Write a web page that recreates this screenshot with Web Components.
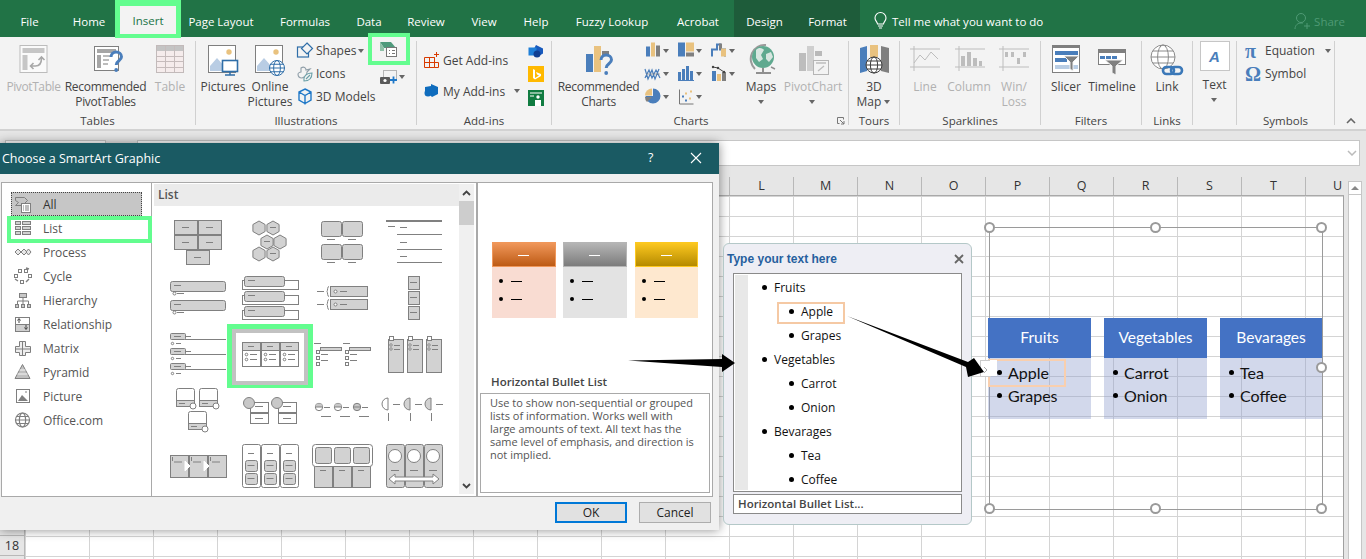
<!DOCTYPE html>
<html lang="en"><head><meta charset="utf-8"><title>SmartArt</title>
<style>
html,body{margin:0;height:559px;overflow:hidden;background:#fff}
body{font:12px "Open Sans","Noto Sans",sans-serif;color:#444;position:relative;width:1366px}
</style></head><body>
<x-tabs>
  <x-tab w="59">File</x-tab><x-tab w="56" pl="4">Home</x-tab><x-tab active>Insert</x-tab><x-tab w="80">Page Layout</x-tab><x-tab w="83" pl="5">Formulas</x-tab><x-tab w="50">Data</x-tab><x-tab w="64">Review</x-tab><x-tab w="52">View</x-tab><x-tab w="52">Help</x-tab><x-tab w="100">Fuzzy Lookup</x-tab><x-tab w="72">Acrobat</x-tab><x-tab w="61" ctx>Design</x-tab><x-tab w="65" ctx>Format</x-tab>
  <x-tell>Tell me what you want to do</x-tell>
  <x-share>Share</x-share>
</x-tabs>
<x-ribbon>
  <x-group w="196" label="Tables" pl="6">
    <x-big w="55" off style="letter-spacing:-.4px"><x-icon slot="icon" name="pivot" box="17.5 43 32 32"></x-icon>PivotTable</x-big>
    <x-big w="89" style="letter-spacing:-.3px"><x-icon slot="icon" name="recpivot" box="90 43 32 34"></x-icon>Recommended<br>PivotTables</x-big>
    <x-big w="40" off><x-icon slot="icon" name="table" box="154 43 32 32"></x-icon>Table</x-big>
  </x-group>
  <x-group w="221" label="Illustrations" pl="4">
    <x-big w="46"><x-icon slot="icon" name="pictures" box="207 43 34 34"></x-icon>Pictures</x-big>
    <x-big w="48"><x-icon slot="icon" name="online" box="254 43 34 34"></x-icon>Online<br>Pictures</x-big>
    <x-col w="74">
      <x-sbtn pl="2"><x-icon slot="icon" name="shapes" box="296 43.5 18 17"></x-icon>Shapes <x-caret></x-caret></x-sbtn>
      <x-sbtn pl="2"><x-icon slot="icon" name="iconsi" box="296 66 18 17"></x-icon>Icons</x-sbtn>
      <x-sbtn pl="2"><x-icon slot="icon" name="cube" box="296 89.5 18 17"></x-icon>3D Models</x-sbtn>
    </x-col>
    <x-col w="42">
      <x-hl><x-icon name="smartart" box="380 42 20 18"></x-icon></x-hl>
      <x-sbtn pl="11"><x-icon slot="icon" name="shot" box="381 67 18 16"></x-icon><x-caret></x-caret></x-sbtn>
    </x-col>
  </x-group>
  <x-group w="135" label="Add-ins" pl="7">
    <x-addins>
      <x-sbtn h="31" pl="0"><x-icon slot="icon" name="getadd" box="424 52 16 16"></x-icon><span style="margin-left:1px">Get Add-ins</span></x-sbtn>
      <x-sbtn h="31" pl="0" wd="104"><x-icon slot="icon" name="myadd" box="424 82 16 16"></x-icon><span style="margin-left:1px">My Add-ins</span><x-caret style="margin-left:7px"></x-caret></x-sbtn>
    </x-addins>
    <x-office>
      <x-icon name="visio" box="528 45 16 13"></x-icon>
      <x-icon name="bing" box="528 66 16 16"></x-icon>
      <x-icon name="people" box="528 89 16 16"></x-icon>
    </x-office>
  </x-group>
  <x-group w="297" label="Charts" corner lr="18">
    <x-big w="93" style="letter-spacing:-.3px"><x-icon slot="icon" name="recchart" box="584 43 32 34"></x-icon>Recommended<br>Charts</x-big>
    <x-col w="33">
      <x-sbtn nogap><x-icon slot="icon" name="c1" box="645 43.5 18 17"></x-icon><x-caret></x-caret></x-sbtn>
      <x-sbtn nogap><x-icon slot="icon" name="c4" box="645 66 18 17"></x-icon><x-caret></x-caret></x-sbtn>
      <x-sbtn nogap><x-icon slot="icon" name="c7" box="645 89.5 18 17"></x-icon><x-caret></x-caret></x-sbtn>
    </x-col>
    <x-col w="33">
      <x-sbtn nogap><x-icon slot="icon" name="c2" box="678 43.5 18 17"></x-icon><x-caret></x-caret></x-sbtn>
      <x-sbtn nogap><x-icon slot="icon" name="c5" box="678 66 18 17"></x-icon><x-caret></x-caret></x-sbtn>
      <x-sbtn nogap><x-icon slot="icon" name="c8" box="678 89.5 18 17"></x-icon><x-caret></x-caret></x-sbtn>
    </x-col>
    <x-col w="33">
      <x-sbtn nogap><x-icon slot="icon" name="c3" box="711 43.5 18 17"></x-icon><x-caret></x-caret></x-sbtn>
      <x-sbtn nogap><x-icon slot="icon" name="c6" box="711 66 18 17"></x-icon><x-caret></x-caret></x-sbtn>
    </x-col>
    <x-big w="34"><x-icon slot="icon" name="maps" box="745 43 32 34"></x-icon>Maps<br><x-caret></x-caret></x-big>
    <x-big w="70" off><x-icon slot="icon" name="pivchart" box="797 43 32 34"></x-icon>PivotChart<br><x-caret></x-caret></x-big>
  </x-group>
  <x-group w="51" label="Tours">
    <x-big w="50"><x-icon slot="icon" name="map3d" box="857 43 32 32"></x-icon>3D<br>Map <x-caret></x-caret></x-big>
  </x-group>
  <x-group w="141" label="Sparklines" pl="3">
    <x-big w="44" off><x-icon slot="icon" name="sline" box="909 43 32 32"></x-icon>Line</x-big>
    <x-big w="44" off><x-icon slot="icon" name="scol" box="953 43 32 32"></x-icon>Column</x-big>
    <x-big w="46" off><x-icon slot="icon" name="swin" box="999 43 32 32"></x-icon>Win/<br>Loss</x-big>
  </x-group>
  <x-group w="101" label="Filters" pl="4">
    <x-big w="42"><x-icon slot="icon" name="slicer" box="1050 43 32 32"></x-icon>Slicer</x-big>
    <x-big w="50"><x-icon slot="icon" name="timeline" box="1096 43 32 34"></x-icon>Timeline</x-big>
  </x-group>
  <x-group w="51" label="Links">
    <x-big w="50"><x-icon slot="icon" name="link" box="1151 43 34 34"></x-icon>Link</x-big>
  </x-group>
  <x-group w="44" label="">
    <x-big w="43" up><x-textbox slot="icon"></x-textbox>Text<br><x-caret></x-caret></x-big>
  </x-group>
  <x-group w="98" label="Symbols" pl="8">
    <x-col w="88">
      <x-sbtn wd="88" pl="0"><x-glyph slot="icon">π</x-glyph>Equation<x-caret style="margin-left:8px"></x-caret></x-sbtn>
      <x-sbtn wd="88" pl="0"><x-glyph slot="icon">Ω</x-glyph>Symbol</x-sbtn>
    </x-col>
  </x-group>
  <x-collapse></x-collapse>
</x-ribbon>
<x-fbar></x-fbar>
<x-sheet></x-sheet>

<x-dialog>
  <span slot="title">Choose a SmartArt Graphic</span>
  <x-cat slot="cats" icon="all" sel>All</x-cat>
  <x-cat slot="cats" icon="list" hl>List</x-cat>
  <x-cat slot="cats" icon="process">Process</x-cat>
  <x-cat slot="cats" icon="cycle">Cycle</x-cat>
  <x-cat slot="cats" icon="hier">Hierarchy</x-cat>
  <x-cat slot="cats" icon="rel">Relationship</x-cat>
  <x-cat slot="cats" icon="matrix">Matrix</x-cat>
  <x-cat slot="cats" icon="pyr">Pyramid</x-cat>
  <x-cat slot="cats" icon="pic">Picture</x-cat>
  <x-cat slot="cats" icon="globe">Office.com</x-cat>
  <x-gallery slot="gallery"></x-gallery>
  <x-preview slot="preview"></x-preview>
</x-dialog>

<x-textpane></x-textpane>
<x-smartart></x-smartart>
<x-arrows></x-arrows>

<script>
const B='#4a7ebb',T='#e9c27f',G='#7f7f7f',LG='#b9b9b9',W='#fff';
const q=(x,y,c=B)=>`<path d="M${x-5} ${y-5}c0-3.2 2.4-5 5.2-5s5.3 1.8 5.3 4.8c0 4-5.3 4-5.3 8.2" fill="none" stroke="${c}" stroke-width="3"/><circle cx="${x+.2}" cy="${y+8}" r="1.9" fill="${c}"/>`;
const globe=(x,y,r,c,sw=1)=>`<g fill="#fff" stroke="${c}" stroke-width="${sw}"><circle cx="${x}" cy="${y}" r="${r}"/><ellipse cx="${x}" cy="${y}" rx="${r*.45}" ry="${r}" fill="none"/><path d="M${x-r} ${y}h${2*r}M${x-r*.86} ${y-r*.5}h${1.72*r}M${x-r*.86} ${y+r*.5}h${1.72*r}" fill="none"/></g>`;
const ICONS={
pivot:`<rect x="19.5" y="45.5" width="27" height="27" fill="#fafafa" stroke="#bcbcbc"/><rect x="22" y="48" width="22" height="5" fill="#c6c6c6"/><rect x="22" y="55" width="5" height="15" fill="#c6c6c6"/><path d="M31 66h4c4 0 6-3 6-8M38 60l3-3 3 3M33 63l-3 3 3 3" fill="none" stroke="#a8a8a8" stroke-width="1.6"/>`,
recpivot:`<rect x="94.5" y="46.5" width="24" height="24" fill="#fff" stroke="${G}"/><rect x="97" y="49" width="19" height="4" fill="#a6a6a6"/><rect x="97" y="55" width="4" height="13" fill="#a6a6a6"/><path d="M103 56h9M103 60h6M103 64h5" stroke="#a6a6a6" stroke-width="1.6"/>${q(116,62)}`,
table:`<rect x="156.5" y="45.5" width="27" height="27" fill="#f5ecec" stroke="#c2baba"/><rect x="157" y="46" width="26" height="5" fill="#c4c4c4"/><path d="M165.5 46v26M174.5 46v26M157 56.5h26M157 61.5h26M157 67.5h26" stroke="#c6bcbc" fill="none"/>`,
pictures:`<rect x="209.5" y="45.5" width="27" height="27" fill="#fff" stroke="${G}"/><path d="M211 71v-5l7-8 8 9 1 4z" fill="#b9cde4"/><circle cx="230" cy="52" r="2.7" fill="${T}"/><rect x="223.5" y="60.5" width="15" height="11" fill="#fff" stroke="#2f6ea8" stroke-width="1.6"/><path d="M231 72v2.5M226 75h10" stroke="#2f6ea8" stroke-width="1.5"/>`,
online:`<rect x="256.5" y="45.5" width="27" height="27" fill="#fff" stroke="${G}"/><path d="M258 71v-5l7-8 8 9 1 4z" fill="#b9cde4"/><circle cx="277" cy="52" r="2.7" fill="${T}"/>${globe(278,68,7.5,'#2f6ea8')}`,
shapes:`<rect x="297.5" y="48.5" width="11" height="10" fill="none" stroke="#2f6ea8" stroke-width="1.2"/><path d="M307 44.5l5.5 5.5-5.5 5.5-5.5-5.5z" fill="#f3f3f3" stroke="#2f6ea8" stroke-width="1.2"/>`,
iconsi:`<path d="M301 69c3-2 5 0 5 2l4-1-3 3c0 3-2 5-5 6-3 0-4-2-4-4 0-1 2-2 3-2z" fill="none" stroke="#8f9ea8" stroke-width="1.1"/><path d="M304 82c-1-4 2-8 8-8 0 5-3 8-8 8zM306 80l4-4" fill="#f3f3f3" stroke="#6aa0a8" stroke-width="1.1"/>`,
cube:`<path d="M305 90.5l6 3v8l-6 3.5-6-3.5v-8zM299 93.5l6 3.5 6-3.5M305 97v9" fill="none" stroke="#1f78c8" stroke-width="1.4"/>`,
smartart:`<path d="M382 44h11l5 6h-12z" fill="#4f9a7c"/><path d="M382 44l4 6v3h-4z" fill="#8fc0a8"/><rect x="388.5" y="49.5" width="10" height="9" fill="#fff" stroke="#777"/><path d="M391 52.5h1M394 52.5h3M391 55.5h1M394 55.5h3" stroke="#777"/>`,
shot:`<rect x="385.5" y="68.5" width="13" height="10" fill="none" stroke="#777" stroke-dasharray="1 1"/><rect x="382" y="75" width="10" height="7" rx="1" fill="#5a5a5a"/><circle cx="387" cy="78.5" r="1.6" fill="#fff"/><path d="M395.5 74.5v7M392 78h7" stroke="#1f78c8" stroke-width="1.8"/>`,
getadd:`<path d="M424.5 57.5h10v10h-10zM424.5 62.5h14M434.5 57.5v10h4v-5M429.5 57.5v10" fill="none" stroke="#d83b01"/><path d="M436.5 52v5M434 54.5h5" stroke="#d83b01"/>`,
myadd:`<path d="M431 83l7 3v7l-6 3-3-3-1 0-3-1v-6l6-1z" fill="#0f6cbd"/><circle cx="428" cy="92" r="3.5" fill="#0f6cbd"/>`,
visio:`<path d="M536 45l7 3.5v5l-5 3-5-3v-3z" fill="#185abd"/><rect x="528.5" y="47.5" width="8" height="8" fill="#1e7fd8"/><circle cx="537" cy="54" r="3.5" fill="#103f91"/>`,
bing:`<rect x="528" y="66" width="16" height="16" fill="#ffb900"/><path d="M533 69l2 1v8l4-2.5-2-1-1-2.5 5 2v2l-6 3.5-2-1.5z" fill="#fff"/>`,
people:`<rect x="528" y="89" width="16" height="16" fill="#107c41"/><path d="M530 92h12M530 95h4" stroke="#fff" stroke-width="1.2"/><circle cx="538" cy="96" r="1.7" fill="#fff"/><path d="M535 105v-6h6v6z" fill="#fff"/>`,
recchart:`<rect x="587" y="54" width="7" height="18" fill="${B}"/><rect x="595" y="46" width="7" height="26" fill="${T}"/><rect x="603" y="51" width="7" height="5" fill="${G}"/>${q(607,65)}`,
c1:`<rect x="646" y="48" width="4" height="10" fill="${B}"/><rect x="651" y="44" width="4" height="14" fill="${T}"/><rect x="656" y="47" width="4" height="11" fill="${G}"/>`,
c2:`<rect x="678" y="44" width="7" height="14" fill="${B}"/><rect x="686" y="44" width="8" height="9" fill="${T}"/><rect x="686" y="54" width="8" height="4" fill="${G}"/>`,
c3:`<path d="M711 58v-8h5v-5h5v5h5v8h-2v-6h-5v-5h-1v5h-5v6z" fill="${B}"/><rect x="719" y="45" width="3" height="6" fill="${G}"/><rect x="721" y="50" width="5" height="8" fill="${T}"/>`,
c4:`<path d="M645 70l3 10 4-9 3 9 4-10M645 79l4-8 3 8 4-8 4 8" fill="none" stroke="${B}" stroke-width="1.2"/><path d="M646 75h14" stroke="${G}" stroke-width=".6"/>`,
c5:`<g fill="${B}"><rect x="678" y="73" width="3" height="8"/><rect x="682" y="70" width="3" height="11"/><rect x="686" y="67" width="3" height="14"/><rect x="690" y="72" width="3" height="9"/></g><path d="M678 81.5h16" stroke="${B}"/>`,
c6:`<rect x="712" y="72" width="4" height="10" fill="${B}"/><rect x="717" y="75" width="4" height="7" fill="${T}"/><rect x="722" y="73" width="4" height="9" fill="${G}"/><path d="M713 68l5 1 6 4" stroke="#444" fill="none"/><circle cx="713" cy="68" r="1.2" fill="#444"/><circle cx="718" cy="69" r="1.2" fill="#444"/><circle cx="724" cy="73" r="1.2" fill="#444"/>`,
c7:`<path d="M653 90a7.5 7.5 0 1 1-7.5 7.5h7.5z" fill="${B}"/><path d="M652 90v7h-7a7 7 0 0 1 7-7z" fill="${T}"/><path d="M645 98.5h7l-5 5a7 7 0 0 1-2-5z" fill="${G}"/>`,
c8:`<path d="M679.5 91v14.5h14" fill="none" stroke="#777"/><g fill="${B}"><rect x="682" y="97" width="2" height="2"/><rect x="685" y="101" width="2" height="2"/></g><g fill="${T}"><rect x="685" y="94" width="2" height="2"/><rect x="690" y="92" width="2" height="2"/><rect x="689" y="99" width="2" height="2"/></g>`,
maps:`<path d="M766 45a14 14 0 0 0-11 24" fill="none" stroke="#9a9a9a" stroke-width="2"/><circle cx="763" cy="57" r="11" fill="#5fa98f"/><path d="M756 50c3-3 6-2 8 0l-3 5 2 4-4 3-3-4zM766 54l5-2 2 5-4 5-3-3z" fill="#d7e6e0"/><path d="M756 73h15M763 68v5" stroke="#8f8f8f" stroke-width="2"/><path d="M771 67l4 2" stroke="#8f8f8f" stroke-width="1.5"/>`,
pivchart:`<rect x="799" y="53" width="7" height="18" fill="#bdbdbd"/><rect x="807" y="46" width="7" height="25" fill="#cfcfcf"/><rect x="815" y="51" width="7" height="5" fill="#b9b9b9"/><rect x="813.5" y="60.5" width="15" height="14" fill="#f3f3f3" stroke="#b5b5b5"/><path d="M816 63h10M818 71l6-5" stroke="#bdbdbd" stroke-width="1.3"/>`,
map3d:`<path d="M859 48l7-2v25l-7 2z" fill="${B}"/><path d="M869 45h8v12h-8z" fill="${T}"/><path d="M880 46l8 2v25l-8-2z" fill="${G}"/>${globe(873,65,8,'#3e3e3e')}`,
sline:`<path d="M910 49h30M910 67h30M914 46v25" stroke="#bdbdbd" fill="none"/><path d="M914 63l6-8 5 5 6-8 7 7" stroke="#bdbdbd" fill="none"/>`,
scol:`<path d="M955 49h30M955 67h30M959 46v25" stroke="#bdbdbd" fill="none"/><rect x="961" y="56" width="4" height="10" fill="#bdbdbd"/><rect x="967" y="52" width="4" height="14" fill="#bdbdbd"/><rect x="973" y="58" width="4" height="8" fill="#bdbdbd"/><rect x="979" y="61" width="3" height="5" fill="#bdbdbd"/>`,
swin:`<path d="M1000 49h30M1000 67h30M1004 46v25" stroke="#bdbdbd" fill="none"/><g fill="#bdbdbd"><rect x="1006" y="52" width="3" height="5"/><rect x="1012" y="52" width="3" height="5"/><rect x="1018" y="58" width="3" height="6"/><rect x="1024" y="52" width="3" height="5"/></g>`,
slicer:`<rect x="1052.5" y="45.5" width="27" height="27" fill="#fff" stroke="${G}"/><rect x="1052" y="45" width="28" height="3" fill="${G}"/><rect x="1055" y="51" width="23" height="4" fill="${B}"/><rect x="1055" y="58" width="12" height="4" fill="${B}"/><rect x="1055" y="65" width="23" height="4" fill="#b9cde4"/><path d="M1064 56h15l-6 6v9l-3-2v-7z" fill="${G}" stroke="#f3f3f3"/>`,
timeline:`<rect x="1098.5" y="49.5" width="27" height="15" fill="#fff" stroke="${G}"/><rect x="1098" y="49" width="28" height="4" fill="${G}"/><g fill="${B}"><rect x="1100" y="56" width="5" height="3"/><rect x="1106" y="56" width="5" height="3"/><rect x="1112" y="56" width="5" height="3"/></g><path d="M1105 60h18l-7 6v9l-4-2v-7z" fill="${G}" stroke="#f3f3f3"/>`,
link:`${globe(1164,57,12,'#8a8a8a')}<g fill="none" stroke="#3b78b8" stroke-width="2.6"><rect x="1164" y="67" width="11" height="7" rx="3.5"/><rect x="1172" y="67" width="11" height="7" rx="3.5"/></g>`,
share:`<circle cx="1300" cy="18" r="4.5" fill="none" stroke="#4f9a75"/><path d="M1294 29c0-4 3-6 6-6h2M1306 23v6M1303 26h6" fill="none" stroke="#4f9a75"/>`,
bulb:`<path d="M877.5 24c0-2-2.5-3-2.5-6a5.5 5.5 0 0 1 11 0c0 3-2.5 4-2.5 6zM878 26h5M879 28h3" fill="none" stroke="#fff" stroke-width="1.1"/>`,
all:`<path d="M15.5 197.5h9l3 3-3 3 2 2h-11l3-3-3-2z" fill="none" stroke="${G}"/><rect x="21.5" y="203.5" width="9" height="9" fill="#fff" stroke="${G}"/><path d="M23 206h1M25 206h4M23 208h1M25 208h4M23 210h1M25 210h4" stroke="${G}"/>`,
list:`<g fill="#d0d0d0" stroke="${G}"><rect x="15.5" y="221.5" width="5" height="3"/><rect x="22.5" y="221.5" width="8" height="3"/><rect x="15.5" y="226.5" width="5" height="3"/><rect x="22.5" y="226.5" width="8" height="3"/><rect x="15.5" y="231.5" width="5" height="3"/><rect x="22.5" y="231.5" width="8" height="3"/></g>`,
process:`<path d="M15 252l3-3 3 3-3 3zM21 252l3-3 3 3-3 3zM26 252l2.5-3 2.5 3-2.5 3z" fill="#e8e8e8" stroke="${G}"/>`,
cycle:`<g fill="#fff" stroke="${G}"><rect x="18.5" y="269.5" width="3" height="3"/><rect x="24.5" y="269.5" width="3" height="3"/><rect x="28.5" y="274.5" width="3" height="3"/><rect x="20.5" y="280.5" width="3" height="3"/><rect x="14.5" y="274.5" width="3" height="3"/></g><path d="M29 279l-3 3M15 279l3 2M26 268l3 1" stroke="${G}" stroke-width="1.4"/>`,
hier:`<rect x="19.5" y="293.5" width="7" height="4" fill="#c8c8c8" stroke="${G}"/><path d="M23 298v3M17.5 304v-3h11v3M23 301v3" fill="none" stroke="${G}"/><g fill="#c8c8c8" stroke="${G}"><rect x="15.5" y="304.5" width="3" height="3"/><rect x="21.5" y="304.5" width="3" height="3"/><rect x="27.5" y="304.5" width="3" height="3"/></g>`,
rel:`<rect x="15.5" y="317.5" width="14" height="14" fill="#fff" stroke="${G}"/><rect x="15.5" y="324.5" width="14" height="7" fill="#d0d0d0" stroke="${G}"/><path d="M19 323v-4M17.5 320.5l1.5-2 1.5 2M26 325v4M24.5 327.5l1.5 2 1.5-2" fill="none" stroke="#444"/>`,
matrix:`<path d="M19.5 341.5h6v5h5v6h-5v3h-6v-3h-4v-6h4z" fill="#eee" stroke="${G}"/><path d="M22.5 341v14M15.5 349h15" stroke="${G}"/>`,
pyr:`<path d="M22.5 364.5l7.5 14h-15z" fill="#c0c0c0" stroke="${G}"/><path d="M19.5 370h6M17.5 374h10" stroke="#f5f5f5"/>`,
pic:`<rect x="16.5" y="389.5" width="13" height="13" fill="#fff" stroke="${G}"/><path d="M18 401l4-6 3 3 3 3z" fill="${G}"/><circle cx="26" cy="392" r="1" fill="#aaa"/>`,
globe:globe(22.5,420,7,G,1.2)
};
const css=`:host{box-sizing:border-box}*{box-sizing:border-box}`;
class E extends HTMLElement{
  connectedCallback(){ if(this.shadowRoot)return; this.attachShadow({mode:'open'}).innerHTML=`<style>${css}${this.styles()}</style>${this.markup()}`; }
  styles(){return ':host{display:block}'} markup(){return '<slot></slot>'}
  attr(n,d=''){return this.hasAttribute(n)?this.getAttribute(n):d}
}
const def=(n,c)=>customElements.define(n,c);
def('x-icon',class extends E{
  styles(){return ':host{display:block;line-height:0;flex:none}svg{overflow:visible;display:block}'}
  markup(){const b=this.attr('box','0 0 16 16').split(' ');return `<svg width="${b[2]}" height="${b[3]}" viewBox="${b.join(' ')}">${ICONS[this.attr('name')]||''}</svg>`}
});
def('x-caret',class extends E{styles(){return ':host{display:inline-block;width:7px;height:4px;vertical-align:middle;flex:none}i{display:block;width:0;height:0;border:3.5px solid transparent;border-top:4px solid currentColor;border-bottom:0;color:#666}'}markup(){return '<i></i>'}});
def('x-tabs',class extends E{styles(){return ':host{display:flex;height:37px;background:#217346;color:#fff;position:relative;font-size:11.5px}'}});
def('x-tab',class extends E{
  styles(){const a=this.hasAttribute('active'),c=this.hasAttribute('ctx');
    return a?`:host{flex:none;width:66px;height:38px;border:solid #63fd8f;border-width:6px 5px 4px;background:#f3f3f3;color:#217346;display:flex;align-items:center;justify-content:center;position:relative;z-index:2;padding-top:1px}`
    :`:host{flex:none;width:${this.attr('w')}px;height:37px;padding-top:6px;padding-left:${this.attr('pl',0)}px;display:flex;align-items:center;justify-content:center;white-space:nowrap;${c?'background:#1e5c3a;':''}}`}
});
def('x-tell',class extends E{styles(){return ':host{display:flex;align-items:center;height:37px;padding:6px 0 0 14px;gap:5px;white-space:nowrap}'}markup(){return `<x-icon name="bulb" box="874 13 13 17"></x-icon><slot></slot>`}});
def('x-share',class extends E{styles(){return ':host{display:flex;align-items:center;height:37px;padding-top:6px;margin-left:auto;margin-right:21px;gap:3px;color:#4f9a75}'}markup(){return `<x-icon name="share" box="1293 13 17 17"></x-icon><slot></slot>`}});
def('x-ribbon',class extends E{styles(){return ':host{display:flex;height:94px;background:#f3f3f3;border-bottom:2px solid #d2d2d2;padding-top:4px;font-size:12px}'}});
def('x-group',class extends E{
  styles(){return `:host{display:block;flex:none;width:${this.attr('w')}px;height:84px;border-right:1px solid #d0d0d0;position:relative}
  .c{display:flex;height:68px;padding:2px 0 0 ${this.attr('pl',0)}px}
  .l{position:absolute;left:0;right:${this.attr('lr',0)}px;top:72px;text-align:center;line-height:16px;height:16px;white-space:nowrap;font-size:11.5px}
  .k{position:absolute;right:3px;top:76px}`}
  markup(){return `<div class="c"><slot></slot></div><div class="l">${this.attr('label')}</div>${this.hasAttribute('corner')?'<svg class="k" width="8" height="8"><path d="M.5 .5h6v2M.5 .5v6h2M3 3l4 4M7 4v3H4" fill="none" stroke="#777"/></svg>':''}`}
});
def('x-big',class extends E{
  styles(){return `:host{display:flex;flex-direction:column;align-items:center;flex:none;width:${this.attr('w')}px;${this.hasAttribute('off')?'color:#b1b1b1;':''}${this.hasAttribute('up')?'margin-top:-2px;':''}}
  .i{height:32px;display:flex;justify-content:center;width:100%}.t{margin-top:3.5px;line-height:15px;text-align:center;white-space:nowrap}`}
  markup(){return `<div class="i"><slot name="icon"></slot></div><div class="t"><slot></slot></div>`}
});
def('x-col',class extends E{styles(){return `:host{display:flex;flex-direction:column;flex:none;width:${this.attr('w')}px;margin-top:-4px}`}});
def('x-sbtn',class extends E{styles(){return `:host{display:flex;align-items:center;height:${this.attr('h',23)}px;white-space:nowrap;padding-left:${this.attr('pl',0)}px;${this.hasAttribute('nogap')?'':'gap:2px;'}${this.hasAttribute('wd')?'width:'+this.attr('wd')+'px;':''}}`}markup(){return '<slot name="icon"></slot><slot></slot>'}});
def('x-hl',class extends E{styles(){return ':host{display:flex;align-items:center;justify-content:center;width:42px;height:32px;margin-top:-6px;border:4px solid #63fd8f;background:#f3f3f3;position:relative;z-index:3;padding:0 3px 0 0}'}});
def('x-addins',class extends E{styles(){return ':host{display:flex;flex-direction:column;width:104px;margin-top:1.5px;flex:none}'}});
def('x-office',class extends E{styles(){return ':host{display:flex;flex-direction:column;gap:8px;margin-top:2px}'}});
def('x-textbox',class extends E{styles(){return ':host{display:flex;width:30px;height:30px;background:#fff;border:1px solid #c6c6c6;align-items:center;justify-content:center;font:italic bold 15px "Liberation Sans",sans-serif;color:#4a7ebb}'}markup(){return 'A'}});
def('x-glyph',class extends E{styles(){return ':host{display:block;flex:none;width:18px;font:bold 20px "Liberation Serif",serif;color:#4a7ebb;line-height:20px}'}markup(){return '<slot></slot>'}});
def('x-collapse',class extends E{styles(){return ':host{display:flex;flex:1;align-items:flex-end;justify-content:flex-end;padding:0 10px 5px 0}'}markup(){return '<svg width="10" height="6"><path d="M1 5l4-4 4 4" fill="none" stroke="#666" stroke-width="1.600"/></svg>'}});
def('x-fbar',class extends E{styles(){return ':host{display:block;height:45px;background:#e6e6e6;padding:9px 6px 0 5px}.r{display:flex;gap:31px;height:26px}.n{width:101px;background:#fff;border:1px solid #c6c6c6}.f{flex:1;background:#fff;border:1px solid #c6c6c6;position:relative}svg{position:absolute;right:2px;top:9px}'}markup(){return '<div class="r"><div class="n"></div><div class="f"><svg width="10" height="6"><path d="M1 1l4 4 4-4" fill="none" stroke="#bbb" stroke-width="1.500"/></svg></div></div>'}});
def('x-sheet',class extends E{
  styles(){return `:host{display:grid;grid-template-columns:25px 1319px 22px;grid-template-rows:20px 364px;background:#e6e6e6;height:384px;overflow:hidden}
  .cols{display:flex;overflow:hidden;border-bottom:1px solid #a9a9a9;padding-top:1px}
  .cols div{flex:none;width:64px;height:19px;border-left:1px solid #b8b8b8;text-align:center;line-height:18px;font-size:12.5px;color:#333}
  .rows{display:flex;flex-direction:column}.rows div{flex:none;height:20px;border-bottom:1px solid #b8b8b8;border-right:1px solid #b8b8b8;text-align:center;line-height:19px;font-size:12.5px;color:#333}
  .grid{background-color:#fff;border-right:1px solid #a0a0a0;background-image:linear-gradient(90deg,#d4d4d4 1px,transparent 1px),linear-gradient(#d4d4d4 1px,transparent 1px);background-size:64px 20px}
  .sb{grid-row:1/3;grid-column:3;position:relative;padding:5px 4px 0 4px}.sb b{display:block;height:400px;background:#fff;border:1px solid #c6c6c6}
  .sb i{position:absolute;top:5px;left:4px;width:14px;height:14px;background:#fff;border:1px solid #c6c6c6}.sb svg{position:absolute;top:9px;left:7px}`}
  markup(){let c='',r='';for(let i=0;i<21;i++){c+=`<div>${i>=11?String.fromCharCode(65+i):''}</div>`}for(let i=1;i<=19;i++){r+=`<div>${i==18?18:''}</div>`}
    return `<div></div><div class="cols">${c}</div><div class="sb"><b></b><i></i><svg width="8" height="5"><path d="M0 5l4-4 4 4z" fill="#888"/></svg></div><div class="rows">${r}</div><div class="grid"></div>`}
});
def('x-dialog',class extends E{
  styles(){return `:host{display:block;position:absolute;left:0;top:143px;width:719px;height:387px;background:#f0f0f0;box-shadow:0 0 10px rgba(0,0,0,.45);z-index:5;font-size:12px;color:#555}
  .t{height:31px;background:#1a5a63;color:#fff;display:flex;align-items:center;padding-left:2px;font-size:12.5px;position:relative}
  .t i{position:absolute;font-style:normal;left:648px;top:6px}.t svg{position:absolute;left:690px;top:9px}
  .m{display:flex;padding:8px 0 0 1px;height:323px}
  .l{display:flex;width:476px;border:1px solid #a9a9a9;background:#fff;position:relative}
  .c{width:150px;flex:none;border-right:1px solid #a9a9a9;padding:9px 0 0 9px}
  .r{width:236px;border:1px solid #a9a9a9;background:#fff}
  .f{display:flex;gap:12px;padding:5px 0 0 555px}
  .f div{width:72px;height:21px;background:#e1e1e1;border:1px solid #adadad;text-align:center;line-height:19px;color:#222;font-size:12px}
  .f div.d{border:2px solid #0078d7;line-height:17px}`}
  markup(){return `<div class="t"><slot name="title"></slot><i>?</i><svg width="12" height="12"><path d="M1 1l10 10M11 1L1 11" stroke="#fff" stroke-width="1.100"/></svg></div>
  <div class="m"><div class="l"><div class="c"><slot name="cats"></slot></div><slot name="gallery"></slot></div><div class="r"><slot name="preview"></slot></div></div>
  <div class="f"><div class="d">OK</div><div>Cancel</div></div>`}
});
def('x-cat',class extends E{
  styles(){return `:host{display:flex;align-items:center;height:24px;width:131px;padding-left:3px;gap:11px;position:relative;${this.hasAttribute('sel')?'background:#c6c6c6;outline:1px dotted #444;outline-offset:-1px;color:#333;':''}}
  b{position:absolute;left:-4px;top:0;width:145px;height:27px;border:4px solid #63fd8f}`}
  markup(){const n=this.attr('icon');const ys={all:192,list:216,process:240,cycle:264,hier:288,rel:312,matrix:336,pyr:360,pic:384,globe:408}[n];
    return `<x-icon name="${n}" box="14 ${ys} 18 24"></x-icon><slot></slot>${this.hasAttribute('hl')?'<b></b>':''}`}
});
const S='#808080',F='#d2d2d2';
const R=(x,y,w,h,f=F,rx=0)=>`<rect x="${x+.5}" y="${y+.5}" width="${w}" height="${h}" rx="${rx}" fill="${f}" stroke="${S}"/>`;
const D=(a,b,y)=>`<path d="M${a} ${y+.5}H${b}" stroke="${S}"/>`;
const C=(x,y,r,f='#fff',s=S)=>`<circle cx="${x}" cy="${y}" r="${r}" fill="${f}" stroke="${s}"/>`;
const box=(x,y,w,h,f,rx)=>R(x,y,w,h,f,rx)+D(x+w/2-3.5,x+w/2+3.5,y+Math.floor(h/2));
const hex=(x,y,r=7,d)=>`<path d="M${x} ${y-r}l${r*.87} ${r/2}v${r}l${-r*.87} ${r/2}l${-r*.87} ${-r/2}v${-r}z" fill="${F}" stroke="${S}"/>`+(d?D(x-3,x+3,y-1):'');
const T_=[
 box(174,220,23,14)+box(198,220,23,14)+box(174,235,23,14)+box(198,235,23,14)+box(186,250,23,14),
 hex(259,228)+hex(273,228,7,1)+hex(267,242,7,1)+hex(280,242)+hex(259,254)+hex(273,254,7,1),
 R(321,221,20,15,F,2)+R(342,221,20,15,F,2)+R(321,244,20,15,F,2)+R(342,244,20,15,F,2)+D(327,335,239)+D(348,356,239)+D(327,335,262)+D(348,356,262),
 `<path d="M386 221h56" stroke="${S}" stroke-width="2"/>`+D(388,395,226)+D(400,407,227)+D(397,442,234)+D(400,407,242)+D(397,442,249)+D(400,407,256)+D(397,442,262),
 R(170,281,55,10,F,2)+D(174,181,285)+C(174.5,293.5,1.5)+D(177,184,293)+R(170,300,55,10,F,2)+D(174,181,304)+C(174.5,312.5,1.5)+D(177,184,312),
 [0,15,30].map(d=>R(242,280+d,56,9,'#fff')+R(244,276+d,40,10,F,2)+D(248,255,280+d)).join(''),
 D(317,324,291)+`<path d="M329 286.5c-2 0-1 4-2 5 1 1 0 5 2 5M329 299.5c-2 0-1 4-2 5 1 1 0 5 2 5" fill="none" stroke="${S}"/>`+R(330,286,37,10)+C(335.5,291.5,1.5)+D(340,347,291)+D(317,324,304)+R(330,299,37,10)+C(335.5,304.5,1.5)+D(340,347,304),
 box(408,276,11,13)+box(408,291,11,13)+box(408,306,11,13),
 [0,15,30].map(d=>R(170,333+d,15,6,F,1)+D(174,181,336+d)+D(186,191,336+d)+`<path d="M185 ${339.5+d}H226" stroke="${S}"/>`+C(172.5,343.5+d,1.2)+D(176,181,343+d)).join(''),
 `<rect x="229.5" y="326.5" width="81" height="59" fill="none" stroke="#63fd8f" stroke-width="5"/><rect x="234" y="331" width="72" height="52" fill="#fff" stroke="#c2c2c2" stroke-width="4"/>`+[242,261,280].map(x=>R(x,342,18,24,'#fff')+R(x,342,18,8)+D(x+6,x+12,346)+C(x+4.5,354.5,1.3)+D(x+8,x+15,354)+C(x+4.5,359.5,1.3)+D(x+8,x+15,359)).join(''),
 D(314,321,343)+D(343,350,343)+[316,345].map(x=>R(x+4,347,21,3)+[350,356,362].map(y=>R(x,y,3,3,'#fff')).join('')+[354,360].map(y=>D(x+5,x+12,y)).join('')).join(''),
 [388,407,426].map(x=>R(x,339,15,33)+R(x+1,336,4,4,'#fff')+C(x+3,345,1.2)+D(x+6,x+12,345)+C(x+3,349,1.2)+D(x+6,x+12,349)).join(''),
 [[176,388],[199,388],[188,411]].map(([x,y])=>R(x,y,18,18,'#fff',2)+R(x,y+12,18,6)+D(x+3,x+9,y+15)+C(x+17,y+18,3)).join(''),
 [[249,250],[277,278]].map(([c,x])=>R(x,402,18,10,'#fff')+R(x,413,18,10,'#fff')+D(x+5,x+13,406)+D(x+5,x+13,418)+C(c,403,5.5,'#c8c8c8')).join(''),
 [319,338,357].map((x,i)=>C(x,407,3.7,i==2?'#c8c8c8':'#fff')+(i<2?`<path d="M${x-3.5} 407a3.5 3.5 0 0 1 7 0z" fill="#c8c8c8"/>`:'')+`<path d="M${x-3.7} 407h7.4" stroke="${S}"/>`+D(x+5,x+11,407)+D(x+2,x+12,416)).join(''),
 [[388,1],[410,2],[431,3]].map(([x,k])=>`<path d="M${x} 398a6 6 0 0 1 0 12z" transform="rotate(180 ${x} 404)" fill="${k==1?'#fff':F}" stroke="${S}"/>`+D(x+5,x+12,404)+`<path d="M${x+.5} 413v8" stroke="${S}"/>`).join(''),
 [170,189,208].map(x=>R(x,455,18,22)+`<path d="M${x+2.5} 457v4M${x+4} 462h8" stroke="${S}" fill="none"/>`).join('')+`<path d="M185 461l5 5-5 5zM204 461l5 5-5 5z" fill="#fff" stroke="#fff"/>`,
 [242,261,280].map(x=>R(x,444,18,43,'#fff',2)+D(x+6,x+12,453)+box(x+3,460,12,11,F,2)+box(x+3,473,12,11,F,2)).join(''),
 [314,333,352].map(x=>R(x,466,18,21)+D(x+6,x+12,470)).join('')+R(312,444,60,22,'#fff',3)+[315,334,353].map(x=>R(x,447,16,16,F,2)).join(''),
 [386,405,424].map(x=>R(x,444,18,43,F,2)+C(x+9,456,6.5)+D(x+5,x+13,470)).join('')+`<path d="M389 479l6-5v3h38v-3l6 5-6 5v-3h-38v3z" fill="#fff" stroke="${S}"/>`
];
def('x-thumb',class extends E{
  styles(){return ':host{display:block;width:72px;height:56px}svg{display:block;overflow:visible}'}
  markup(){const c=+this.attr('c'),r=+this.attr('r');const x=162+72*c,y=213+56*r;
    return `<svg width="72" height="56" viewBox="${x} ${y} 72 56">${T_[r*4+c]}</svg>`}
});
def('x-gallery',class extends E{
  styles(){return `:host{display:flex;flex:1;padding:1px 0 0 2px}
  .m{width:305px}.h{height:22px;background:#ebebeb;font-weight:600;color:#555;padding-left:4px;line-height:21px}
  .g{display:grid;grid-template-columns:repeat(4,72px);grid-auto-rows:56px;padding:7px 0 0 8px}
  .s{width:15px;height:310px;background:#f0f0f0;position:relative}.s svg{position:absolute;left:3px}.s i{position:absolute;left:0;top:17px;width:15px;height:24px;background:#cdcdcd}`}
  markup(){let g='';for(let r=0;r<5;r++)for(let c=0;c<4;c++)g+=`<x-thumb c="${c}" r="${r}"></x-thumb>`;
   return `<div class="m"><div class="h">List</div><div class="g">${g}</div></div><div class="s"><svg style="top:6px" width="9" height="6"><path d="M1 5l3.5-3.5L8 5" fill="none" stroke="#444" stroke-width="1.800"/></svg><i></i><svg style="bottom:5px" width="9" height="6"><path d="M1 1l3.5 3.5L8 1" fill="none" stroke="#444" stroke-width="1.800"/></svg></div>`}
});
def('x-pbox',class extends E{
  styles(){const[a,b,d]=this.attr('c').split(',');return `:host{display:block;width:${this.attr('w',64)}px;height:76px;background:${d};position:relative}
  .h{height:25px;background:linear-gradient(${a},${b});border:1px solid ${a};position:relative}
  .h::after{content:"";position:absolute;left:50%;top:12px;width:11px;height:1px;margin-left:-6px;background:#fff}
  .b{position:absolute;left:7px;width:4px;height:4px;border-radius:50%;background:#000}.d{position:absolute;left:19px;width:11px;height:1px;background:#000}`}
  markup(){return `<div class="h"></div><i class="b" style="top:37px"></i><i class="d" style="top:39px"></i><i class="b" style="top:55px"></i><i class="d" style="top:57px"></i>`}
});
def('x-preview',class extends E{
  styles(){return `:host{display:block;height:100%;padding-top:59px;position:relative}
  .r{display:flex;padding-left:14px}
  .t{margin:56px 0 0 13px;font-weight:600;font-size:11.5px;color:#444;line-height:16px}
  .d{margin:3px 3px 0 2px;width:230px;height:100px;border:1px solid #a9a9a9;padding:2px 9px 0 9px;line-height:13px;font-size:11px;color:#555}`}
  markup(){return `<div class="r"><x-pbox c="#f0975a,#bd5a14,#f9dcd2"></x-pbox><x-pbox c="#b5b5b5,#7c7c7c,#e3e3e3" style="margin-left:7px"></x-pbox><x-pbox w="63" c="#fcc820,#b58a00,#fee8cf" style="margin-left:8px"></x-pbox></div>
  <div class="t">Horizontal Bullet List</div>
  <div class="d">Use to show non-sequential or grouped lists of information. Works well with large amounts of text. All text has the same level of emphasis, and direction is not implied.</div>`}
});
def('x-item',class extends E{
  styles(){const l2=this.attr('l')=='2';return `:host{display:flex;align-items:center;height:24px;padding-left:${l2?41:14}px;gap:7px;position:relative;color:#111}
  i{width:5px;height:5px;border-radius:50%;background:#000;flex:none}
  ${this.hasAttribute('sel')?'b{position:absolute;left:29px;top:3px;width:68px;height:22px;border:2px solid #f5c9a4}':''}`}
  markup(){return `<i></i><slot></slot>${this.hasAttribute('sel')?'<b></b>':''}`}
});
def('x-textpane',class extends E{
  styles(){return `:host{display:block;position:absolute;left:723px;top:243px;width:249px;height:282px;background:#eeeef4;border:1px solid #b4c8c8;border-radius:6px;z-index:6;padding:0 9px}
  .h{height:29px;display:flex;align-items:center;margin-left:-6px;font:bold 12px "Liberation Sans",sans-serif;color:#265f9e}
  .h svg{margin-left:auto;margin-right:-2px}
  .l{height:219px;background:#fff;border:1px solid #8a8a8a;padding:1px 0 0 1px;display:flex;overflow:hidden}
  .st{width:13px;height:215px;background:#e8e8e8;flex:none}.it{flex:1}
  .b{height:20px;margin-top:2px;background:#fff;border:1px solid #8a8a8a;font-weight:600;font-size:11.5px;padding-left:4px;line-height:18px;color:#444}`}
  markup(){const it=[['Fruits',1],['Apple',2,1],['Grapes',2],['Vegetables',1],['Carrot',2],['Onion',2],['Bevarages',1],['Tea',2],['Coffee',2]];
   return `<div class="h">Type your text here<svg width="10" height="10"><path d="M1 1l8 8M9 1L1 9" stroke="#666" stroke-width="1.800"/></svg></div>
   <div class="l"><div class="st"></div><div class="it">${it.map(i=>`<x-item l="${i[1]}" ${i[2]?'sel':''}>${i[0]}</x-item>`).join('')}</div></div>
   <div class="b">Horizontal Bullet List...</div>`}
});
def('x-sabox',class extends E{
  styles(){return `:host{display:block;flex:none;width:${this.attr('w',103)}px;height:101px;position:relative}
  .h{height:40px;background:#4472c4;color:#fff;display:flex;align-items:center;justify-content:center;font-size:15.5px;padding-bottom:2px}
  .b{height:61px;background:rgba(142,157,205,.4);padding:3px 0 0 9px;color:#111;font-size:16px;line-height:23px}
  .r{display:flex;align-items:center;gap:6px}.r i{width:5px;height:5px;border-radius:50%;background:#000}
  u{position:absolute;left:0;top:41px;width:78px;height:28px;border:2px solid #f9cfae}`}
  markup(){const [h,...a]=this.attr('t').split(',');return `<div class="h">${h}</div><div class="b">${a.map(x=>`<div class="r"><i></i>${x}</div>`).join('')}</div>${this.hasAttribute('sel')?'<u></u>':''}`}
});
def('x-smartart',class extends E{
  styles(){return `:host{display:flex;align-items:center;position:absolute;left:989px;top:227px;width:334px;height:283px;border:1px solid #9a9a9a;font-family:Lato,"Open Sans",sans-serif;z-index:4}
  .w{display:flex;gap:13px;margin-left:-2px}
  s{position:absolute;width:11px;height:11px;border-radius:50%;background:#fff;border:2px solid #9a9a9a}
  .x{position:absolute;left:-10px;top:132px;width:11px;height:17px;background:#fff;border:1px solid #ccc}
  .y{position:absolute;left:0;top:132px;width:7px;height:16px;background:#fff}
  .x svg{position:absolute;left:2px;top:5px}`}
  markup(){const hs=[[0,0],[.5,0],[1,0],[1,.5],[0,1],[.5,1],[1,1]];
    return `<div class="w"><x-sabox sel t="Fruits,Apple,Grapes"></x-sabox><x-sabox t="Vegetables,Carrot,Onion"></x-sabox><x-sabox w="102" t="Bevarages,Tea,Coffee"></x-sabox></div>`+
    hs.map(([a,b])=>`<s style="left:${a*332-6.5}px;top:${b*281-6.5}px"></s>`).join('')+`<div class="x"><svg width="6" height="8"><path d="M1 1l3 3-3 3" fill="none" stroke="#aaa"/></svg></div><div class="y"></div>`}
});
def('x-arrows',class extends E{
  styles(){return ':host{position:absolute;left:0;top:0;z-index:7;pointer-events:none;line-height:0}'}
  markup(){return `<svg width="1366" height="559"><polygon points="628,360.5 722,359 722,354 735,363 722,372 722,367"/><polygon points="847,316 968,362 974,358 984,372 968,377 966,367"/></svg>`}
});
</script>
</body></html>
